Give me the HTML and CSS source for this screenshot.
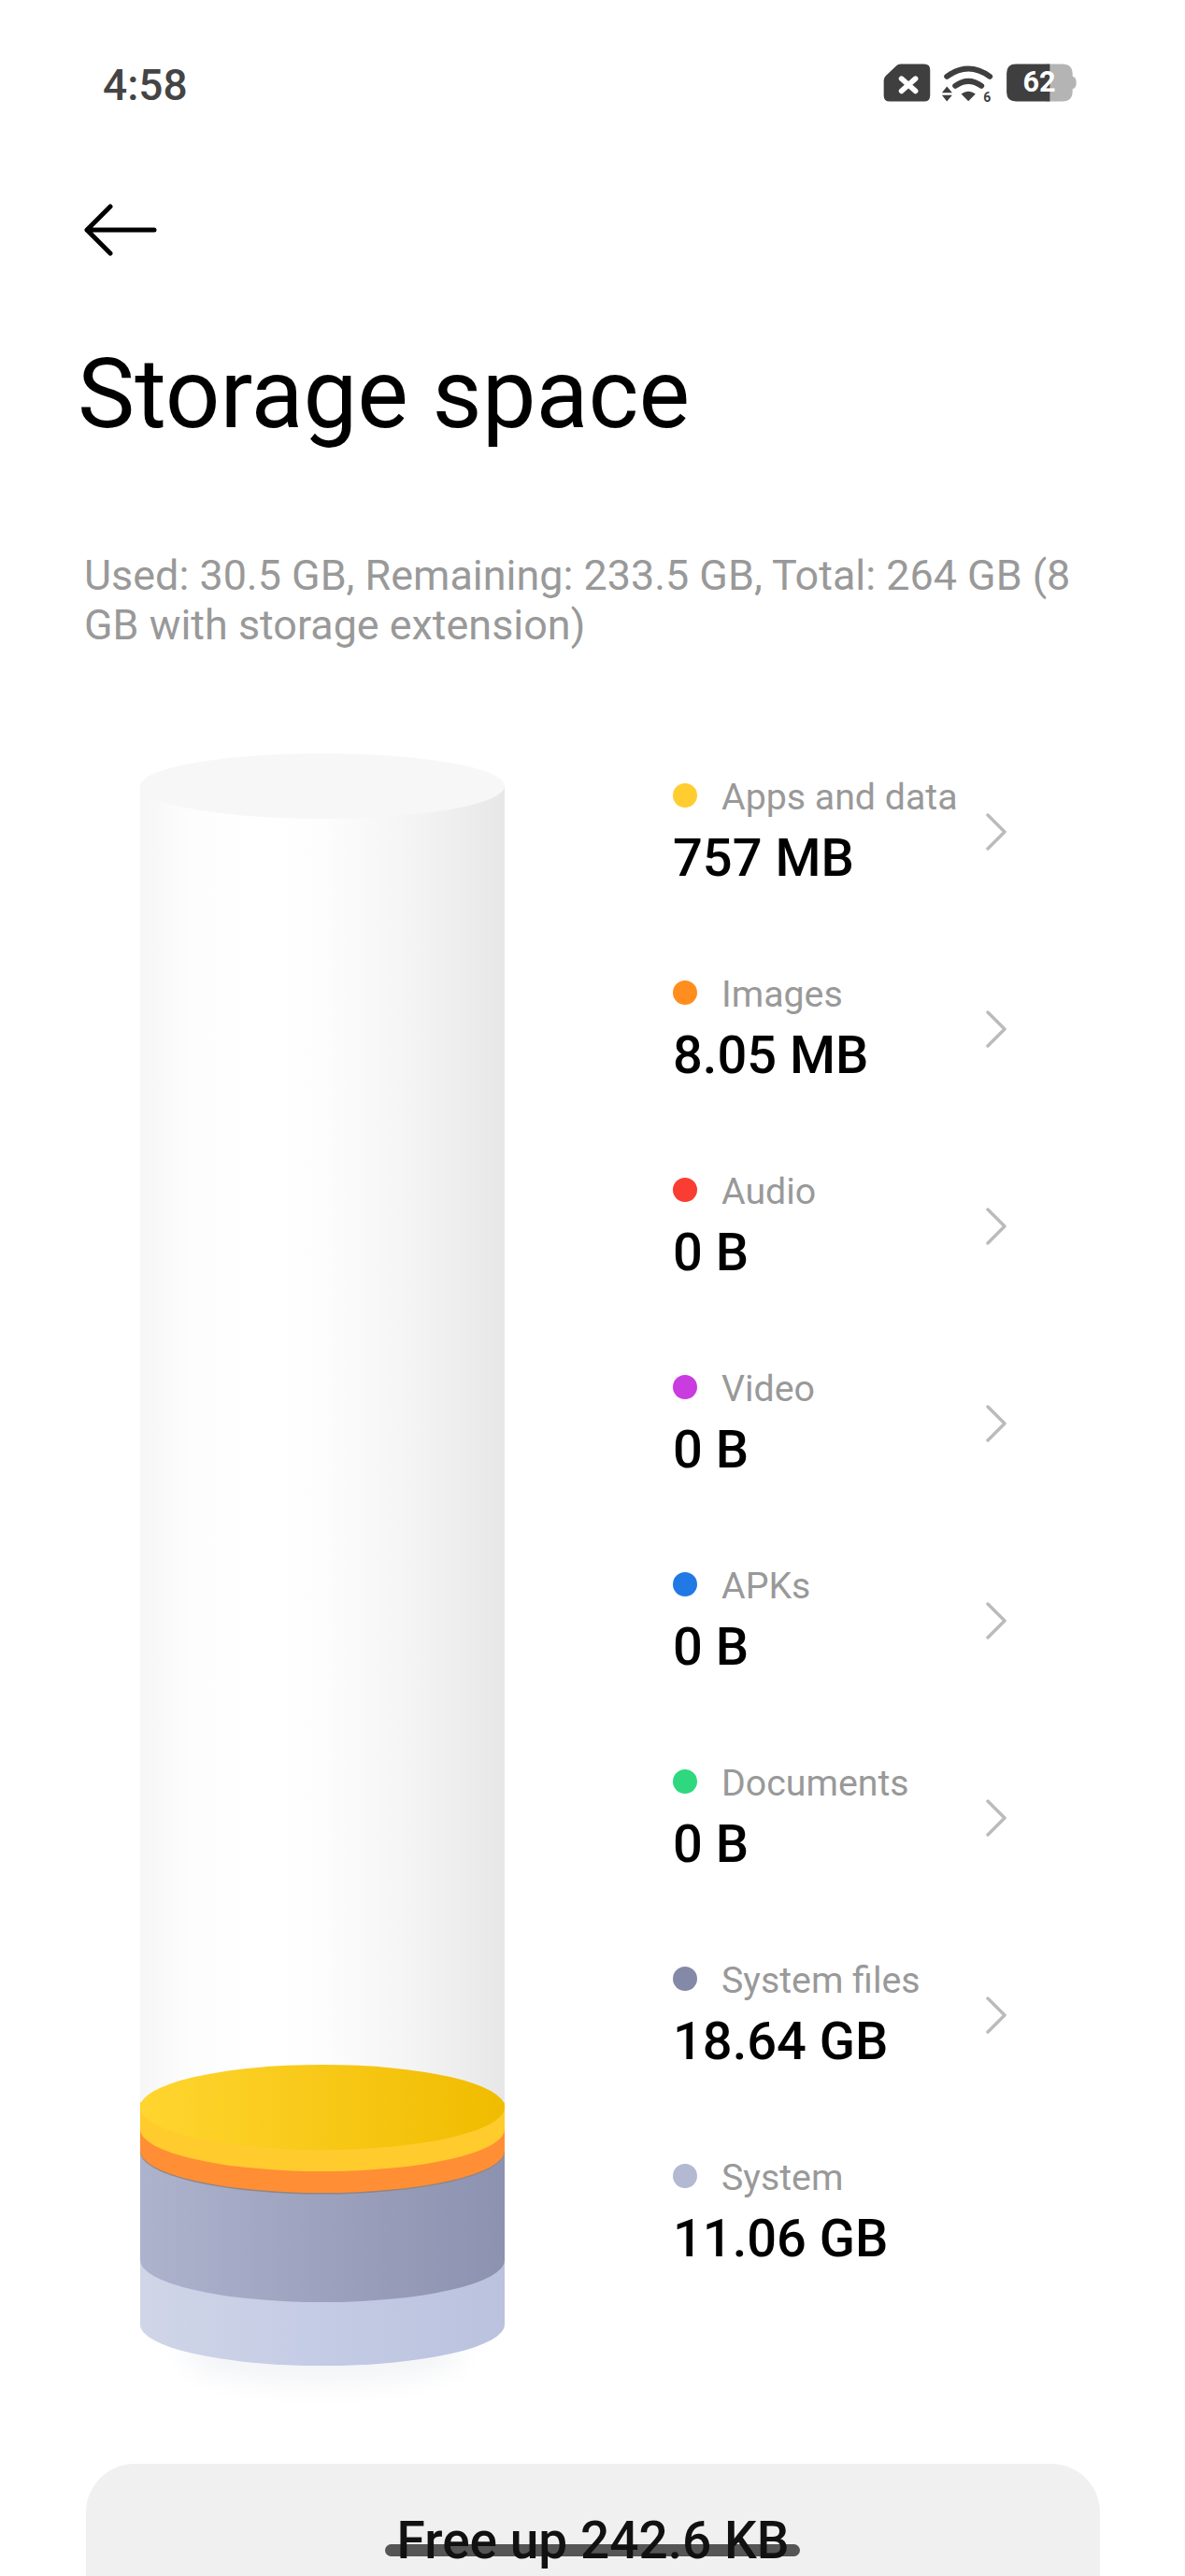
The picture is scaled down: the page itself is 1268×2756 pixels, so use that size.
FILE: index.html
```html
<!DOCTYPE html>
<html lang="en">
<head>
<meta charset="utf-8">
<title>Storage space</title>
<link rel="stylesheet" href="styles.css">
</head>
<body>
<div class="page">
  <header class="status">
    <span class="time">4:58</span>
    <svg class="status-icons" viewBox="130 75 640 140" width="213" height="47" aria-hidden="true">
      <path fill="#3f3f3f" d="M192 85H268q19 0 19 19V186q0 19-19 19H157q-19 0-19-19V137q0-8 6-14L178 91q6-6 14-6z"/>
      <path stroke="#fff" stroke-width="17" stroke-linecap="round" fill="none" d="M195 132L240 172M240 132L195 172"/>
      <path stroke="#3f3f3f" stroke-width="18" stroke-linecap="round" fill="none" d="M341 125Q410 75 479 125M368 155Q410 125 452 155"/>
      <path fill="#3f3f3f" d="M387 181Q410 165 433 181L410 204zM341 157L358 177H325zM341 205L325 185H358z"/>
      <text class="wifi-gen" x="458" y="208">6</text>
      <path fill="#b4b4b4" d="M660 85H712q33 0 33 33V125q12 2 12 20T745 165V172q0 33-33 33H660z"/>
      <path fill="#3f3f3f" d="M672 85V205H563q-30 0-30-30V115q0-30 30-30z"/>
      <text class="battery-level" x="585" y="175">62</text>
    </svg>
  </header>

  <nav class="toolbar">
    <svg class="back" viewBox="0 0 80 56" width="80" height="56" aria-hidden="true">
      <path fill="none" stroke="#000" stroke-width="5" stroke-linecap="round" stroke-linejoin="round" d="M29 3L4 28L29 53M4 28H76"/>
    </svg>
  </nav>

  <h1 class="title">Storage space</h1>
  <p class="summary">Used: 30.5 GB, Remaining: 233.5 GB, Total: 264 GB (8<br>GB with storage extension)</p>

  <main class="content">
    <svg class="cylinder" viewBox="150 800 390 1790" width="390" height="1790" aria-hidden="true">
      <defs>
        <linearGradient id="body" x1="0" x2="1" y1="0" y2="0">
          <stop offset="0" stop-color="#f6f6f6"/>
          <stop offset=".14" stop-color="#fdfdfd"/>
          <stop offset=".35" stop-color="#fff"/>
          <stop offset=".5" stop-color="#fdfdfd"/>
          <stop offset=".75" stop-color="#f4f4f4"/>
          <stop offset="1" stop-color="#e7e7e7"/>
        </linearGradient>
        <linearGradient id="lid" x1="0" x2="1" y1="0" y2="0">
          <stop offset="0" stop-color="#ffd52f"/>
          <stop offset="1" stop-color="#f0bc00"/>
        </linearGradient>
        <linearGradient id="grey" x1="0" x2="1" y1="0" y2="0">
          <stop offset="0" stop-color="#adb2cd"/>
          <stop offset="1" stop-color="#8c92af"/>
        </linearGradient>
        <linearGradient id="light" x1="0" x2="1" y1="0" y2="0">
          <stop offset="0" stop-color="#d0d6e7"/>
          <stop offset=".5" stop-color="#c4cbe5"/>
          <stop offset="1" stop-color="#bbc2dd"/>
        </linearGradient>
        <filter id="blur" x="-20%" y="-100%" width="140%" height="300%">
          <feGaussianBlur stdDeviation="14"/>
        </filter>
      </defs>
      <ellipse cx="345" cy="2518" rx="150" ry="34" fill="#f3f4f7" filter="url(#blur)"/>
      <path fill="url(#body)" d="M150 842V2300H540V842z"/>
      <ellipse cx="345" cy="842" rx="195" ry="35" fill="#f7f7f7"/>
      <path fill="url(#light)" d="M150 2300V2488A195 44 0 0 0 540 2488V2300z"/>
      <path fill="url(#grey)" d="M150 2280V2419A195 45 0 0 0 540 2419V2280z"/>
      <path fill="#8f8684" d="M150 2290V2303A195 45.500 0 0 0 540 2303V2290z"/>
      <path fill="#ff8e35" d="M150 2260V2302A195 45 0 0 0 540 2302V2260z"/>
      <path fill="#ffcb2d" d="M150 2250V2279A195 45 0 0 0 540 2279V2250z"/>
      <ellipse cx="345" cy="2255.500" rx="195" ry="45.500" fill="url(#lid)"/>
    </svg>

    <ul class="legend">
      <li class="row"><span class="dot dot-apps"></span><span class="label">Apps and data</span><span class="value">757 MB</span><svg class="chevron" viewBox="0 0 24 40" width="24" height="40" aria-hidden="true"><path d="M3 2L21 20L3 38"/></svg></li>
      <li class="row"><span class="dot dot-images"></span><span class="label">Images</span><span class="value">8.05 MB</span><svg class="chevron" viewBox="0 0 24 40" width="24" height="40" aria-hidden="true"><path d="M3 2L21 20L3 38"/></svg></li>
      <li class="row"><span class="dot dot-audio"></span><span class="label">Audio</span><span class="value">0 B</span><svg class="chevron" viewBox="0 0 24 40" width="24" height="40" aria-hidden="true"><path d="M3 2L21 20L3 38"/></svg></li>
      <li class="row"><span class="dot dot-video"></span><span class="label">Video</span><span class="value">0 B</span><svg class="chevron" viewBox="0 0 24 40" width="24" height="40" aria-hidden="true"><path d="M3 2L21 20L3 38"/></svg></li>
      <li class="row"><span class="dot dot-apks"></span><span class="label">APKs</span><span class="value">0 B</span><svg class="chevron" viewBox="0 0 24 40" width="24" height="40" aria-hidden="true"><path d="M3 2L21 20L3 38"/></svg></li>
      <li class="row"><span class="dot dot-docs"></span><span class="label">Documents</span><span class="value">0 B</span><svg class="chevron" viewBox="0 0 24 40" width="24" height="40" aria-hidden="true"><path d="M3 2L21 20L3 38"/></svg></li>
      <li class="row"><span class="dot dot-sysfiles"></span><span class="label">System files</span><span class="value">18.64 GB</span><svg class="chevron" viewBox="0 0 24 40" width="24" height="40" aria-hidden="true"><path d="M3 2L21 20L3 38"/></svg></li>
      <li class="row"><span class="dot dot-system"></span><span class="label">System</span><span class="value">11.06 GB</span></li>
    </ul>
  </main>

  <footer class="footer">
    <div class="free-up">
      <span class="free-bar"></span>
      <span class="free-text">Free up 242.6 KB</span>
    </div>
  </footer>
</div>
</body>
</html>
```

FILE: styles.css
```css
* { box-sizing: border-box; }
html, body { margin: 0; padding: 0; background: #fff; }
body { font-family: Roboto, "Liberation Sans", sans-serif; }
.page { width: 1268px; height: 2756px; overflow: hidden; }

.status { height: 130px; padding: 65px 112px 0 110px; display: flex; justify-content: space-between; align-items: flex-start; }
.time { font-size: 46px; font-weight: 500; line-height: 50px; padding-top: 1px; color: #444; }
.status-icons { display: block; }
.wifi-gen { font: 700 42px Roboto, sans-serif; fill: #3f3f3f; }
.battery-level { font: 700 92px Roboto, sans-serif; fill: #fff; }

.toolbar { height: 88px; padding: 88px 0 0 89px; }
.back { display: block; }

.title { margin: 145px 0 0; padding-left: 83px; font-size: 103px; font-weight: 400; line-height: 118px; color: #000; }

.summary { margin: 0; padding: 109px 0 0 90px; font-size: 44.900px; line-height: 52.500px; color: #999; }

.content { margin-top: 103.500px; display: flex; padding-left: 150px; }
.cylinder { display: block; flex: none; }
.legend { list-style: none; margin: 0 0 0 180px; padding: 0; }
.row { position: relative; height: 211px; width: 340px; display: grid; grid-template-columns: 52px auto; grid-template-rows: 50px 66px; padding-top: 29px; align-items: center; }
.label { font-size: 39.300px; line-height: 50px; color: #999; white-space: nowrap; }
.value { grid-column: 1 / 3; font-size: 56px; font-weight: 500; line-height: 66px; padding-top: 15px; color: #000; white-space: nowrap; }
.dot { width: 26px; height: 26px; border-radius: 50%; margin-top: -3px; }
.dot-apps { background: #ffcd2f; }
.dot-images { background: #ff8e1f; }
.dot-audio { background: #f93d33; }
.dot-video { background: #c93ce0; }
.dot-apks { background: #2079e5; }
.dot-docs { background: #2fd87f; }
.dot-sysfiles { background: #8589a8; }
.dot-system { background: #b3b8d3; }
.chevron { position: absolute; left: 334px; top: 71px; }
.chevron path { fill: none; stroke: #bbb; stroke-width: 3.500; stroke-linecap: round; stroke-linejoin: round; }

.footer { padding: 47px 91px 0 92px; }
.free-up { position: relative; height: 300px; border-radius: 52px; background: #f0f0f0; display: flex; justify-content: center; padding-top: 50px; }
.free-bar { position: absolute; left: 320px; top: 86px; width: 444px; height: 13px; border-radius: 7px; background: #555; }
.free-text { position: relative; font-size: 55px; font-weight: 500; line-height: 64px; height: 64px; color: #111; }
```
